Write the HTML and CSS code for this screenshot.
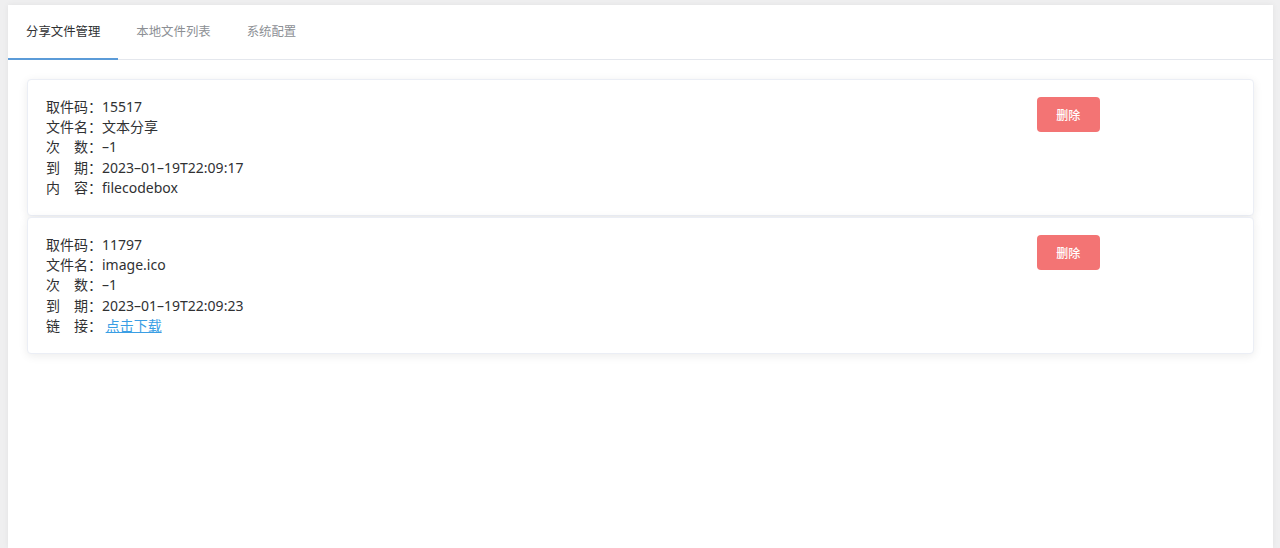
FILE: index.html
```html
<!DOCTYPE html>
<html lang="zh-CN">
<head>
<meta charset="utf-8">
<title>FileCodeBox 管理</title>
<link rel="stylesheet" href="styles.css">
</head>
<body>
<div class="panel">
  <div class="tabs">
    <div class="tab active">分享文件管理</div>
    <div class="tab">本地文件列表</div>
    <div class="tab">系统配置</div>
  </div>
  <div class="content">
    <div class="card">
      <div class="info">
        <div class="row">取件码：15517</div>
        <div class="row">文件名：文本分享</div>
        <div class="row">次　数：–1</div>
        <div class="row">到　期：2023–01–19T22:09:17</div>
        <div class="row">内　容：filecodebox</div>
      </div>
      <div class="actions"><button class="btn-danger">删除</button></div>
    </div>
    <div class="card">
      <div class="info">
        <div class="row">取件码：11797</div>
        <div class="row">文件名：image.ico</div>
        <div class="row">次　数：–1</div>
        <div class="row">到　期：2023–01–19T22:09:23</div>
        <div class="row">链　接： <a class="link" href="#">点击下载</a></div>
      </div>
      <div class="actions"><button class="btn-danger">删除</button></div>
    </div>
  </div>
</div>
</body>
</html>
```
FILE: styles.css
```css
html, body {
  margin: 0;
  padding: 0;
}
body {
  background: #efeff0;
  font-family: "Noto Sans", "Noto Sans CJK SC", sans-serif;
  color: #303133;
  height: 548px;
  overflow: hidden;
}
.panel {
  margin: 5px 7px 0 8px;
  background: #fff;
  min-height: 543px;
  box-shadow: 0 0 6px rgba(0, 0, 0, 0.06);
}
.tabs {
  display: flex;
  height: 54px;
  border-bottom: 1px solid #e4e7ed;
}
.tab {
  padding: 0 18px;
  font-size: 12.4px;
  line-height: 54px;
  color: #8c8f94;
  border-bottom: 2px solid transparent;
  margin-bottom: -1px;
}
.tab.active {
  color: #303133;
  border-bottom-color: #5b9bd8;
}
.content {
  padding: 19px 19px 0 19px;
}
.card {
  display: grid;
  grid-template-columns: 5fr 1fr;
  padding: 17px 18px;
  border: 1px solid #ebeef5;
  border-radius: 4px;
  box-shadow: 0 2px 10px rgba(0, 0, 0, 0.08);
  background: #fff;
  margin-bottom: 1px;
}
.info {
  font-size: 14px;
  line-height: 20.2px;
  color: #303133;
}
.link {
  color: #3a9ee4;
  text-decoration: underline;
}
.actions {
  display: flex;
  align-items: flex-start;
}
.btn-danger {
  width: 63px;
  height: 35px;
  border: none;
  border-radius: 4px;
  background: #f37474;
  color: #fff;
  font-family: "Noto Sans", "Noto Sans CJK SC", sans-serif;
  font-size: 12px;
  font-weight: 500;
  padding: 0;
}
```
